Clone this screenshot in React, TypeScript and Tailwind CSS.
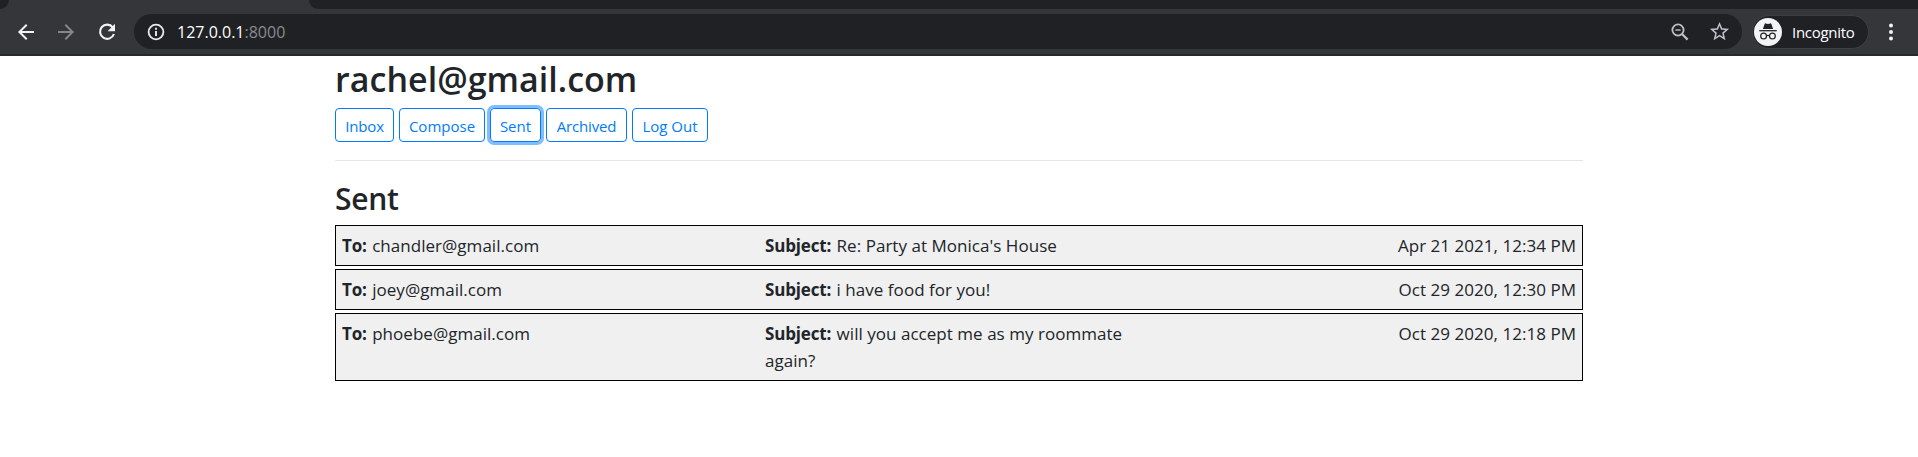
import { MdArrowBack, MdArrowForward, MdStarBorder } from "react-icons/md";

const navItems = [
  { label: "Inbox", width: "w-[59px] tracking-[-0.01em]" },
  { label: "Compose", width: "w-[86px]" },
  { label: "Sent", width: "w-[51px]", focused: true },
  { label: "Archived", width: "w-[81px] tracking-[-0.01em]" },
  { label: "Log Out", width: "w-[76px]" },
];

const emails = [
  { to: "chandler@gmail.com", subject: "Re: Party at Monica's House", date: "Apr 21 2021, 12:34 PM" },
  { to: "joey@gmail.com", subject: "i have food for you!", date: "Oct 29 2020, 12:30 PM" },
  { to: "phoebe@gmail.com", subject: "will you accept me as my roommate again?", date: "Oct 29 2020, 12:18 PM" },
];

function ReloadIcon() {
  return (
    <svg width="20" height="20" viewBox="0 0 20 20" fill="none">
      <path d="M15.8 5.4A7.1 7.1 0 1 0 16.9 12" stroke="#f1f3f4" strokeWidth="2.1" />
      <path d="M18 1.8v7.4h-7.4z" fill="#f1f3f4" />
    </svg>
  );
}

function InfoIcon() {
  return (
    <svg width="18" height="18" viewBox="0 0 18 18" fill="none">
      <circle cx="9" cy="9" r="7.4" stroke="#e8eaed" strokeWidth="1.8" />
      <path d="M9 8v5M9 4.8v2" stroke="#e8eaed" strokeWidth="1.9" />
    </svg>
  );
}

function ZoomOutIcon() {
  return (
    <svg width="18" height="18" viewBox="0 0 18 18" fill="none" stroke="#bdc1c6">
      <circle cx="7" cy="7" r="5.6" strokeWidth="1.8" />
      <path d="M11 11l5.6 5.6" strokeWidth="2.2" />
      <path d="M4.4 7h5.2" strokeWidth="1.4" />
    </svg>
  );
}

function IncognitoIcon() {
  return (
    <svg width="28" height="28" viewBox="0 0 28 28" fill="none">
      <circle cx="14" cy="14" r="14" fill="#f1f3f4" />
      <path d="M8.9 11l1.7-5.1c.2-.5.6-.7 1.1-.5l2.3.6 2.3-.6c.5-.2.9 0 1.1.5l1.7 5.1z" fill="#202124" />
      <path d="M5.3 12.7h17.4" stroke="#202124" strokeWidth="1.3" />
      <circle cx="9.6" cy="18.1" r="2.9" stroke="#202124" strokeWidth="1.2" />
      <circle cx="18.4" cy="18.1" r="2.9" stroke="#202124" strokeWidth="1.2" />
      <path d="M12.5 17.8c.9-.6 2.1-.6 3 0" stroke="#202124" strokeWidth="1.2" />
    </svg>
  );
}

function MenuDots() {
  return (
    <svg width="6" height="20" viewBox="0 0 6 20" fill="#f1f3f4">
      <circle cx="3" cy="3.4" r="2" />
      <circle cx="3" cy="10" r="2" />
      <circle cx="3" cy="16.5" r="2" />
    </svg>
  );
}

function BrowserBar() {
  return (
    <header className="bg-[#35363a]">
      <div className="flex h-[9px] justify-between">
        <div className="w-[9px] rounded-br-[9px] bg-[#202124]" />
        <div className="w-[1609px] rounded-bl-[9px] bg-[#202124]" />
      </div>
      <div className="flex h-[47px] items-start border-b-2 border-[#28292c] pl-[14px] pr-6 pt-[5px]">
        <div className="flex h-[35px] items-center">
          <MdArrowBack size={24} color="#f1f3f4" />
          <MdArrowForward size={24} color="#85868a" className="ml-4" />
          <div className="ml-[19px]">
            <ReloadIcon />
          </div>
        </div>
        <div className="ml-[17px] flex h-[35px] w-[1608px] items-center rounded-full bg-[#202124] pl-[13px] pr-[11px]">
          <InfoIcon />
          <div className="ml-3 text-[16px] leading-[36px] text-[#898b8f]">
            <span className="text-white">127.0.0.1</span>:8000
          </div>
          <div className="ml-auto">
            <ZoomOutIcon />
          </div>
          <MdStarBorder size={23} color="#bdc1c6" className="ml-[19px]" />
        </div>
        <div className="ml-[10px] mt-px flex h-[34px] w-[117px] items-center rounded-full border border-[#3f4044] bg-[#202124] pl-px">
          <IncognitoIcon />
          <span className="ml-[10px] text-[15px] leading-8 tracking-[-0.02em] text-white">Incognito</span>
        </div>
        <div className="ml-auto flex h-[35px] items-center">
          <MenuDots />
        </div>
      </div>
    </header>
  );
}

export default function App() {
  return (
    <div className="h-[457px] overflow-hidden bg-white font-['Open_Sans','Noto_Sans',sans-serif] text-[#212529]">
      <BrowserBar />
      <main className="ml-[335px] w-[1248px]">
        <h2 className="h-[52px] text-[34px] font-semibold leading-[46px] tracking-[0.001em]">rachel@gmail.com</h2>
        <nav className="flex gap-[5px]">
          {navItems.map((item) => (
            <button
              key={item.label}
              className={`h-[34px] rounded-[4px] border border-[#007bff] text-center text-[15px] leading-[34px] text-[#007bff] ${item.width} ${item.focused ? "shadow-[0_0_0_3px_#80bdff]" : ""}`}
            >
              {item.label}
            </button>
          ))}
        </nav>
        <hr className="mt-[18px] border-t border-[#e5e5e5]" />
        <h3 className="mt-[18px] h-[46px] text-[30px] font-semibold leading-[40px] tracking-[-0.01em]">Sent</h3>
        <ul className="flex flex-col gap-[3px]">
          {emails.map((email) => (
            <li key={email.to} className="flex border border-black bg-[#f0f0f0] px-[6px] py-[6px] text-[17px] leading-[27px] tracking-[0.002em]">
              <div className="w-[423px]">
                <b className="mr-px tracking-[-0.01em]">To:</b> {email.to}
              </div>
              <div className="w-[380px]">
                <b className="mr-px tracking-[-0.01em]">Subject:</b> {email.subject}
              </div>
              <div className="ml-auto">{email.date}</div>
            </li>
          ))}
        </ul>
      </main>
    </div>
  );
}
